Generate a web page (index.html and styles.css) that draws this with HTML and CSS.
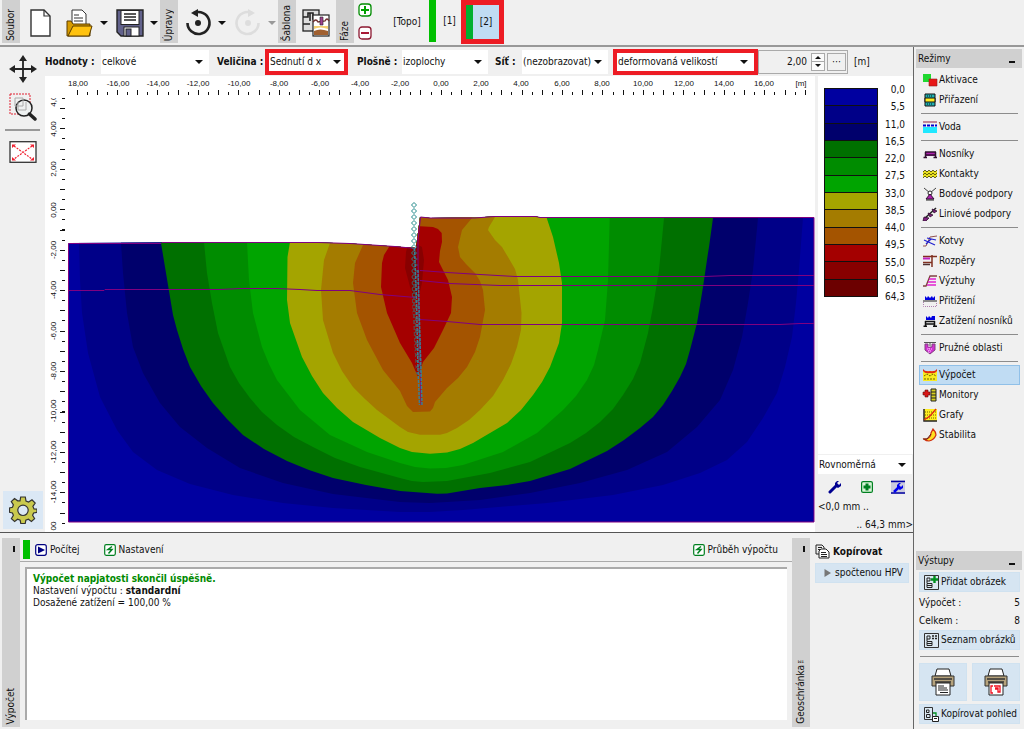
FILE: index.html
```html
<!DOCTYPE html>
<html lang="cs">
<head>
<meta charset="utf-8">
<title>Výpočet</title>
<link rel="stylesheet" href="styles.css">
</head>
<body>
<div class="app">
  <header class="toolbar">
    <span class="strip"><span class="strip-text">Soubor</span></span>
    <div class="tools file-tools">
      <button class="tool" aria-label="Nový"><svg width="22" height="28" viewBox="0 0 22 28"><path d="M1 1H14L20 7V27H1Z" fill="#fff" stroke="#333" stroke-width="1.4"/><path d="M14 1V7H20" fill="none" stroke="#333" stroke-width="1.2"/></svg></button>
      <button class="tool" aria-label="Otevřít"><svg width="28" height="28" viewBox="0 0 28 28"><path d="M6 16V1H16L20 5V16Z" fill="#fff" stroke="#333"/><path d="M8 6h5M8 9h9M8 12h9" stroke="#333" stroke-width="1.2"/><path d="M1 27V12H5L7 15H24V27Z" fill="#d79b00" stroke="#5a3c00"/><path d="M2 27L7 17H26L23 27Z" fill="#ffc20e" stroke="#5a3c00"/></svg></button>
      <button class="drop" aria-label="Poslední soubory"></button>
      <button class="tool" aria-label="Uložit"><svg width="28" height="28" viewBox="0 0 28 28"><path d="M1 1H27V27H5L1 23Z" fill="#62628c" stroke="#222" stroke-width="1.4"/><rect x="5" y="1.500" width="18" height="14" fill="#fff" stroke="#222"/><path d="M8 5h12M8 8h12M8 11h12" stroke="#222" stroke-width="1.3"/><rect x="8" y="18" width="15" height="9" fill="#fff" stroke="#222"/><rect x="10" y="20" width="5" height="7" fill="#62628c" stroke="#222"/></svg></button>
      <button class="drop" aria-label="Možnosti uložení"></button>
    </div>
    <span class="strip"><span class="strip-text">Úpravy</span></span>
    <div class="tools edit-tools">
      <button class="tool" aria-label="Zpět"><svg width="28" height="28" viewBox="0 0 28 28"><path d="M3.500 14A11 11 0 1 0 10 4" fill="none" stroke="#222" stroke-width="2.600"/><path d="M7 4L14 0V8Z" fill="#222"/><circle cx="14" cy="14" r="3" fill="#222"/></svg></button>
      <button class="drop" aria-label="Historie zpět"></button>
      <button class="tool" aria-label="Znovu" disabled><svg width="28" height="28" viewBox="0 0 28 28"><path d="M24.500 14A11 11 0 1 1 18 4" fill="none" stroke="#ddd" stroke-width="2.600"/><path d="M21 4L14 0V8Z" fill="#ddd"/><circle cx="14" cy="14" r="3" fill="#ddd"/></svg></button>
      <button class="drop faded" aria-label="Historie znovu" disabled></button>
    </div>
    <span class="strip"><span class="strip-text">Šablona</span></span>
    <div class="tools template-tools">
      <button class="tool" aria-label="Šablona"><svg width="28" height="28" viewBox="0 0 28 28"><rect x="1" y="1" width="16" height="21" fill="#ddd" stroke="#222" stroke-width="1.300"/><path d="M1 8H6V4H11V10H17M8 4V12M1 15H8" fill="none" stroke="#222" stroke-width="1.600"/><rect x="11" y="6" width="16" height="21" fill="#fff" stroke="#222" stroke-width="1.200"/><path d="M11 13Q14 9 16 13L23 12Q25 8 27 12" fill="none" stroke="#703030" stroke-width="1.300"/><path d="M18 8h3v8h-3z" fill="#a04090" stroke="#222" stroke-width=".6"/><path d="M12 17H26V20Q18 17 12 20Z" fill="#f3cf70"/><path d="M12 22Q18 19 26 22V26H12Z" fill="#a06030"/></svg></button>
    </div>
    <span class="strip"><span class="strip-text">Fáze</span></span>
    <div class="phase-edit">
      <button class="tool" aria-label="Přidat fázi"><svg width="14" height="14" viewBox="0 0 14 14"><rect x="1" y="1" width="12" height="12" rx="3" fill="#fff" stroke="#008c00" stroke-width="1.300"/><path d="M3 7H11M7 3V11" stroke="#00a000" stroke-width="2"/></svg></button>
      <button class="tool" aria-label="Odebrat fázi"><svg width="14" height="14" viewBox="0 0 14 14"><rect x="1" y="1" width="12" height="12" rx="3" fill="#fff" stroke="#8c1830" stroke-width="1.300"/><path d="M3 7H11" stroke="#a00020" stroke-width="1.800"/></svg></button>
    </div>
    <nav class="phases">
      <button class="phase topo">[Topo]</button>
      <button class="phase done">[1]</button>
      <button class="phase done current">[2]</button>
    </nav>
  </header>

  <div class="body">
    <main class="work">
      <section class="upper">
        <div class="view-tools">
          <button class="tool" aria-label="Posun"><svg width="28" height="28" viewBox="0 0 28 28"><path d="M14 3V25M3 14H25" stroke="#222" stroke-width="1.800"/><path d="M14 0L18 6H10ZM14 28L18 22H10ZM0 14L6 10V18ZM28 14L22 10V18Z" fill="#222"/></svg></button>
          <button class="tool" aria-label="Lupa"><svg width="28" height="28" viewBox="0 0 28 28"><rect x="1" y="1" width="20" height="20" fill="none" stroke="#e02030" stroke-dasharray="2 1"/><circle cx="15" cy="15" r="8" fill="#eef1f1" stroke="#222" stroke-width="1.500"/><path d="M6 5H14V13H6ZM9 9V17H17V9" fill="none" stroke="#aaa"/><path d="M20.500 21L26 26" stroke="#222" stroke-width="3.500" stroke-linecap="round"/></svg></button>
          <hr class="tool-line">
          <button class="tool" aria-label="Zobrazit vše"><svg width="28" height="22" viewBox="0 0 28 22"><rect x="1" y=".700" width="26" height="20.600" fill="#fff" stroke="#333" stroke-width="1.300"/><path d="M5 5L23 18M23 5L5 18" stroke="#f02030" stroke-width="1.200" stroke-dasharray="2 1.200"/><path d="M3 3.500H7L3 7ZM25 3.500H21L25 7ZM3 19.500H7L3 16ZM25 19.500H21L25 16Z" fill="#f02030"/></svg></button>
          <button class="tool gear" aria-label="Nastavení zobrazení"><svg width="28" height="28" viewBox="0 0 28 28"><path d="M11.700 1H16.300L17 5L19.600 6.100L23 3.800L26.200 7L23.900 10.400L25 13L28 13.200V16.300L24.600 17L23.600 19.300L25.600 22.600L22.400 25.500L19.400 23.300L16.800 24.300L16.200 27.500H11.800L11.200 24.300L8.600 23.300L5.600 25.500L2.400 22.600L4.400 19.300L3.400 17L.5 16.300V11.900L3.500 11.300L4.400 8.800L2.300 5.600L5.500 2.600L8.700 4.800L11 4.800Z" fill="#c9c94e" stroke="#333" stroke-width="1.200"/><circle cx="14" cy="14.300" r="5.200" fill="#dbe8f5" stroke="#333" stroke-width="1.200"/></svg></button>
        </div>

        <div class="view">
          <form class="options">
            <label class="lab lab-1" for="hod">Hodnoty :</label>
            <span class="combo w-1"><select id="hod"><option>celkové</option></select></span>
            <label class="lab lab-2" for="vel">Veličina :</label>
            <span class="combo w-2 marked"><select id="vel"><option>Sednutí d x</option></select></span>
            <label class="lab lab-3" for="plo">Plošně :</label>
            <span class="combo w-3"><select id="plo"><option>izoplochy</option></select></span>
            <label class="lab lab-4" for="sit">Síť :</label>
            <span class="combo w-4"><select id="sit"><option>(nezobrazovat)</option></select></span>
            <span class="combo w-5 marked"><select id="def" aria-label="Deformace"><option>deformovaná velikostí</option></select></span>
            <span class="spin">
              <input class="spin-value" id="scale" type="text" value="2,00" aria-label="Měřítko deformace">
              <span class="spin-buttons"><button type="button" class="up" aria-label="Zvýšit"></button><button type="button" class="down" aria-label="Snížit"></button></span>
              <button type="button" class="more" aria-label="Další">⋯</button>
            </span>
            <label class="unit" for="scale">[m]</label>
          </form>

          <div class="stage">
            <svg class="chart" viewBox="45 76 770 456" role="img" aria-label="Izoplochy sednutí">
              <defs>
                <pattern id="chain" patternUnits="userSpaceOnUse" x="411" y="202" width="6" height="6"><path d="M3 .5L5.500 3L3 5.500L.5 3Z" fill="none" stroke="#208888"/></pattern>
                <clipPath id="soil"><path d="M68.500 243L161 242.500L318 242.500L350 243.500L395 246.500L416 248L420 217L430 218L475 217.500L494 216.500L536 216.500L540 217.500H814V522H68.500Z"/></clipPath>
                <clipPath id="rule"><rect x="45" y="98" width="20" height="434"/></clipPath>
              </defs>
              <g class="ticks">
                <path d="M76.500 92.500H808" stroke-width="5" stroke-dasharray="1 19.230"/>
                <path d="M76.500 93.500H808" stroke-width="3" stroke-dasharray="1 9.115"/>
                <path d="M62 108.200V524" stroke-width="5" stroke-dasharray="1 19.220"/>
                <path d="M63.500 98V524" stroke-width="3" stroke-dasharray="1 9.110"/>
              </g>
              <g class="scale">
                <text x="78" y="86">18,00</text><text x="118" y="86">-16,00</text><text x="158" y="86">-14,00</text><text x="198" y="86">-12,00</text><text x="239" y="86">-10,00</text><text x="279" y="86">-8,00</text><text x="320" y="86">-6,00</text><text x="360" y="86">-4,00</text><text x="400" y="86">-2,00</text><text x="441" y="86">0,00</text><text x="481" y="86">2,00</text><text x="521" y="86">4,00</text><text x="562" y="86">6,00</text><text x="602" y="86">8,00</text><text x="643" y="86">10,00</text><text x="684" y="86">12,00</text><text x="724" y="86">14,00</text><text x="764" y="86">16,00</text><text x="801" y="86">[m]</text>
              </g>
              <g class="scale" clip-path="url(#rule)">
                <text transform="translate(56 99) rotate(-90)">4,00</text><text transform="translate(56 129) rotate(-90)">4,00</text><text transform="translate(56 169) rotate(-90)">2,00</text><text transform="translate(56 210) rotate(-90)">0,00</text><text transform="translate(56 250) rotate(-90)">-2,00</text><text transform="translate(56 290) rotate(-90)">-4,00</text><text transform="translate(56 331) rotate(-90)">-6,00</text><text transform="translate(56 371) rotate(-90)">-8,00</text><text transform="translate(56 411) rotate(-90)">-10,00</text><text transform="translate(56 452) rotate(-90)">-12,00</text><text transform="translate(56 492) rotate(-90)">-14,00</text><text transform="translate(56 526) rotate(-90)">00</text>
              </g>
              <g clip-path="url(#soil)">
                <rect x="68" y="210" width="747" height="312" fill="#0000a0"/>
                <path fill="#000088" d="M79 200V243L80 280L82 313L88 353L100 397L117 430L133 452L157 470L190 484L233 495L283 503L333 508L400 512L430 512L463 510L547 503L613 495L663 485L700 473L727 460L747 442L763 418L777 393L785 367L792 337L796 303L799 270L803 218V200Z"/>
                <path fill="#00006c" d="M121 200V243L123 273L127 313L133 347L143 373L160 403L180 427L207 448L240 468L283 483L333 494L400 502L430 503L480 500L530 493L580 483L627 470L667 452L697 427L720 400L733 370L742 337L748 303L753 270L758 218V200Z"/>
                <path fill="#007000" d="M161 200V243L165 267L170 297L173 315L177 330L183 349L190 367L201 386L213 403L227 419L243 435L264 449L287 461L309 470L333 478L366 485L400 491L437 493.700L447 493.500L480 488L507 485L530 481L570 469L607 451L624 440L640 428L653 417L663 405L672 391L680 377L686 364L690 350L697 323L703 287L708 253L709 247L713 218V200Z"/>
                <path fill="#008c00" d="M204 200V242L207 273L212 303L218 333L230 367L239 383L250 398L262 412L277 425L294 437L313 447L335 458L360 467L400 478L412 481L423 482L447 481L490 473L530 462L570 443L586 433L600 422L613 409L623 395L633 379L640 363L648 333L653 307L659 270L664 218V200Z"/>
                <path fill="#00a400" d="M247 200V242L249 280L253 313L262 347L269 364L277 380L300 410L330 435L367 452L400 463L415 467L430 468.500L446 468L463 465L503 452L537 433L563 410L576 396L587 380L594 365L598 350L605 320L608 280L609.700 218V200Z"/>
                <path fill="#a4a400" d="M290 200V242L287.500 257L287 300L290 323L302 357L312 376L323 393L337 408L353 422L380 438L400 448L412 452L430 453.700L447 452.500L460 449L473 443L507 423L521 410L533 395L542 382L550 367L559 343L562 323L562 283L559 263L553 237L546.700 218V200Z"/>
                <path fill="#a47c00" d="M333 200L330 243L324 260L321 290L323 320L333 353L342 371L353 387L365 399L377 410L400 427L408 432L420 434.700H440L447 433L457 428L469 420L480 410L493 396L503 380L511 364L517 347L521 330L521.500 313L518 280L515 269L508 257L502 247L495 240L488 230L489 227L495 217V200Z"/>
                <path fill="#a45400" d="M365 200L363 245L355 263L353 283L357 313L367 340L383 370L400 391L407 406L413 412L430 411.500L433 408L435 402L447 388L458 378L467 367L475 352L480 337L485 310L483 290L480 281L475 273L466 264L460 257L458 247L462 230L472 218V200Z"/>
                <path fill="#a40000" d="M391 240L389 247L384 255L382 263L381 287L387 313L400 343L412 363L418 377L423 362L434 348L443 330L451 313L452 297L448 280L439 262L440 251L442 242L441.700 233L438 229L433 227L416 226V240Z"/>
                <path fill="#880000" d="M409 240L406 252L405 268L410 287L415 300L419 296L422 283L424 260L422 247Z"/>
              </g>
              <g fill="none" stroke="#800080">
                <path d="M68.500 522V243.500H161L162 242.500H290L318 242.500L350 243.500L395 246.500L416 248.500M420.500 217L430 218L475 218L494 216.500H536L540 217.500H814V522H68.500"/>
                <path d="M68 290.500H104L105 289.500H220L240 288.500H276L300 289.500L317 290.500H350L380 294.500L416 297.500"/>
                <path d="M420 270.500L447 272.500L480 274.500L515 276.500H704L730 275.500H814M420 280.500L450 283.500L500 285.500H814M420 319.500L447 321.500L480 324.500H780L800 323.500H814M420.500 217L418 240V260L421 405"/>
              </g>
              <path d="M411 202H417V250L422 376H416L412 300L411 250Z" fill="url(#chain)"/>
              <path d="M414.500 248L416.500 300L418 370L419.500 405M418 270L420 340L422 405" fill="none" stroke="#3c7c94" stroke-width="1.500" stroke-dasharray="3 1"/>
            </svg>

            <aside class="legend">
              <div class="legend-scale">
                <div class="swatches"><i class="s1"></i><i class="s2"></i><i class="s3"></i><i class="s4"></i><i class="s5"></i><i class="s6"></i><i class="s7"></i><i class="s8"></i><i class="s9"></i><i class="s10"></i><i class="s11"></i><i class="s12"></i></div>
                <div class="levels"><span>0,0</span><span>5,5</span><span>11,0</span><span>16,5</span><span>22,0</span><span>27,5</span><span>33,0</span><span>38,5</span><span>44,0</span><span>49,5</span><span>55,0</span><span>60,5</span><span>64,3</span></div>
              </div>
              <span class="combo legend-combo"><select aria-label="Typ stupnice"><option>Rovnoměrná</option></select></span>
              <div class="legend-tools">
                <button class="tool" aria-label="Nastavení stupnice"><svg width="14" height="14" viewBox="0 0 14 14"><path d="M2 12L8 6" stroke="#000090" stroke-width="3" stroke-linecap="round"/><path d="M11 1L9 3L11 5L13 3L13 6L10 8L7 6L7 3L9 1Z" fill="#000090"/></svg></button>
                <button class="tool" aria-label="Přidat stupnici"><svg width="12" height="12" viewBox="0 0 12 12"><rect x=".6" y=".6" width="10.800" height="10.800" rx="1.500" fill="#d8f4d8" stroke="#008020" stroke-width="1.200"/><path d="M4.500 2.500h3v2h2v3h-2v2h-3v-2h-2v-3h2z" fill="#008020"/></svg></button>
                <button class="tool" aria-label="Správce stupnic"><svg width="14" height="14" viewBox="0 0 14 14"><rect width="14" height="14" fill="#ccd"/><path d="M0 1.500H14M0 13H14" stroke="#0000a0" stroke-width="1.500"/><path d="M3 12L7 8" stroke="#0000f0" stroke-width="2.500"/><path d="M10 3L8 5L10 7L12 5V8L9 10L6 8V5L8 3Z" fill="#0000f0"/></svg></button>
              </div>
              <div class="range-from">&lt;0,0 mm ..</div>
              <div class="range-to">.. 64,3 mm&gt;</div>
            </aside>
          </div>
        </div>
      </section>

      <section class="lower">
        <div class="strip strip-tall"><i class="pin"></i><span class="strip-text">Výpočet</span></div>
        <div class="calc">
          <div class="calc-bar">
            <i class="state"></i>
            <button class="action start"><svg width="12" height="12" viewBox="0 0 12 12"><rect x=".7" y=".7" width="10.600" height="10.600" rx="2" fill="#fff" stroke="#000080" stroke-width="1.200"/><path d="M3 2.500L10 6L3 9.500Z" fill="#000080"/></svg>Počítej</button>
            <button class="action"><svg width="12" height="12" viewBox="0 0 12 12"><rect x=".7" y=".7" width="10.600" height="10.600" rx="1.500" fill="#fff" stroke="#008020" stroke-width="1.200"/><path d="M8 2.500L4 5.500H8L4.500 9.500" fill="none" stroke="#008020" stroke-width="1.500"/></svg>Nastavení</button>
            <button class="action last"><svg width="12" height="12" viewBox="0 0 12 12"><rect x=".7" y=".7" width="10.600" height="10.600" rx="1.500" fill="#fff" stroke="#008020" stroke-width="1.200"/><path d="M8 2.500L4 5.500H8L4.500 9.500" fill="none" stroke="#008020" stroke-width="1.500"/></svg>Průběh výpočtu</button>
          </div>
          <div class="log">
            <p class="ok">Výpočet napjatosti skončil úspěšně.</p>
            <p>Nastavení výpočtu : <b>standardní</b></p>
            <p>Dosažené zatížení = 100,00 %</p>
          </div>
        </div>
        <div class="strip strip-tall"><i class="pin"></i><span class="strip-text">Geoschránka™</span></div>
        <div class="clip">
          <h2 class="clip-title"><svg width="15" height="15" viewBox="0 0 15 15"><path d="M1 1H7L9 3V10H1Z" fill="#eee" stroke="#222"/><path d="M3 3.500H7M3 5.500H7" stroke="#222"/><path d="M6 5H11L14 8V14H4V7Z" fill="#fff" stroke="#222"/><path d="M6 8.500H11M6 10.500H12M6 12.500H12" stroke="#222"/></svg>Kopírovat</h2>
          <button class="soft hpv"><svg width="7" height="8" viewBox="0 0 7 8"><path d="M.5 0L7 4L.5 8Z" fill="#777"/></svg>spočtenou HPV</button>
        </div>
      </section>
    </main>

    <aside class="side">
      <h2 class="side-title">Režimy<i class="dash"></i></h2>
      <nav class="modes">
        <button class="mode"><svg viewBox="0 0 16 14"><path d="M1 1H9V9H1Z" fill="#20d830"/><path d="M7 6H15V13H7Z" fill="#e81818" stroke="#902020" stroke-width=".6"/></svg>Aktivace</button>
        <button class="mode"><svg viewBox="0 0 16 14"><path d="M3 1H13V13H3Z" fill="#20b0b0" stroke="#111"/><path d="M3 5H13V9H3Z" fill="#ffee20" stroke="#111"/><path d="M5 3h6M5 11h6" stroke="#111" stroke-dasharray="1 1"/></svg>Přiřazení</button>
        <hr>
        <button class="mode"><svg viewBox="0 0 16 14"><path d="M1 2H15" stroke="#902040"/><path d="M1 7H15V13H1Z" fill="#20e8ff"/><path d="M1 5.500H15" stroke="#0000d0" stroke-width="2" stroke-dasharray="3 1"/></svg>Voda</button>
        <hr>
        <button class="mode"><svg viewBox="0 0 16 14"><path d="M3 5H14V9H3Z" fill="#b020b0"/><path d="M3 5H14M3.500 5V10M13.500 5V10M1.500 10.500H5M11.500 10.500H15M4 8H13" stroke="#301030" stroke-width="1.500"/></svg>Nosníky</button>
        <button class="mode"><svg viewBox="0 0 16 14"><path d="M1 4H15V10H1Z" fill="#e8e020"/><path d="M1 5L3 3L5 5L7 3L9 5L11 3L13 5L15 3M1 8L3 6L5 8L7 6L9 8L11 6L13 8L15 6M1 11L3 9L5 11L7 9L9 11L11 9L13 11L15 9" fill="none" stroke="#444000" stroke-width=".8"/></svg>Kontakty</button>
        <button class="mode"><svg viewBox="0 0 16 14"><path d="M2 1L8 6L14 1" fill="none" stroke="#444"/><circle cx="8" cy="6" r="2" fill="#fff" stroke="#222"/><path d="M8 7L12 12H4Z" fill="#b020b0" stroke="#301030"/><path d="M4 13H12" stroke="#222"/></svg>Bodové podpory</button>
        <button class="mode"><svg viewBox="0 0 16 14"><path d="M2 12L14 1" stroke="#222" stroke-width="1.500"/><path d="M2 10L7 11L4 14H1ZM6 6L11 8L8 10ZM10 2L15 4L12 6Z" fill="#802080" stroke="#301030" stroke-width=".8"/></svg>Liniové podpory</button>
        <hr>
        <button class="mode"><svg viewBox="0 0 16 14"><path d="M1 12H4L8 3L15 2" fill="none" stroke="#905050"/><path d="M2 6L13 11M5 4L14 6M4 10L9 5" fill="none" stroke="#2020d0" stroke-width="1.200"/></svg>Kotvy</button>
        <button class="mode"><svg viewBox="0 0 16 14"><path d="M1 2.500H10M1 8.500H10M10 1V13M10 2.500H15" stroke="#803020" stroke-width="1.500"/><path d="M1 4.500H8" stroke="#c020c0" stroke-width="2"/><path d="M1 10.500H8" stroke="#503030" stroke-width="1.500"/></svg>Rozpěry</button>
        <button class="mode"><svg viewBox="0 0 16 14"><path d="M1 12H4L8 2H15" fill="none" stroke="#804040" stroke-width="1.300"/><path d="M7 5H14M6 8H14M5 11H14" stroke="#e020d0" stroke-width="1.500"/></svg>Výztuhy</button>
        <button class="mode"><svg viewBox="0 0 16 14"><path d="M3 6V2L5 4L6 2L8 4L10 2L11 4L13 2V6Z" fill="#0000e0"/><path d="M1 7H15" stroke="#222"/><path d="M1.500 8V12.500H14.500V8" fill="none" stroke="#b080b0" stroke-dasharray="1 1"/></svg>Přitížení</button>
        <button class="mode"><svg viewBox="0 0 16 14"><path d="M4 6V2L6 4L7 2L9 4L10 2L13 2V6Z" fill="#0000e0"/><path d="M3 7.500H13M3.500 7V12M12.500 7V12M1.500 12.300H5M11 12.300H15M4 10H12" stroke="#111" stroke-width="1.500"/></svg>Zatížení nosníků</button>
        <hr>
        <button class="mode"><svg viewBox="0 0 16 14"><path d="M2 1.500H14M8 1V5" stroke="#555"/><path d="M3 3H6V6H10V3H13V9L8 13L3 9Z" fill="#d030d0" stroke="#804080"/><path d="M5 8h6M6 10h4M7 5v7" stroke="#ffc0ff" stroke-dasharray="1 1"/></svg>Pružné oblasti</button>
        <hr>
        <button class="mode selected"><svg viewBox="0 0 16 14"><path d="M1 3H15V13H1Z" fill="#f8ea20"/><path d="M1 1Q3 4 8 3Q13 4 15 1V3Q13 6 8 5Q3 6 1 3Z" fill="#e02818"/><path d="M2 8L5 6L8 8L11 6L14 8M2 11H14" fill="none" stroke="#706000" stroke-dasharray="2 1"/></svg>Výpočet</button>
        <button class="mode"><svg viewBox="0 0 16 14"><path d="M9 1H14V13H9Z" fill="#d8d020" stroke="#222"/><path d="M9 4H14M9 7H14M9 10H14" stroke="#222"/><path d="M3 2H6V4H8V7H6V9H3V7H1V4H3Z" fill="#d81818" stroke="#601010" stroke-width=".6"/></svg>Monitory</button>
        <button class="mode"><svg viewBox="0 0 16 14"><path d="M2 1H15V13H2Z" fill="#ffee20"/><path d="M2 1V13H15" fill="none" stroke="#222" stroke-width="1.500"/><path d="M3 4H15M3 7H15M3 10H15" stroke="#706000" stroke-dasharray="1 1"/><path d="M2 12L8 8L14 1" fill="none" stroke="#e02818" stroke-width="1.300"/></svg>Grafy</button>
        <button class="mode"><svg viewBox="0 0 16 14"><path d="M11 1Q14 4 14 7Q12 12 7 13Q4 13 2 11H5Q9 9 9 5Z" fill="#ffe020" stroke="#d03010" stroke-width="1.200"/><path d="M1 11H5L9 6" fill="none" stroke="#602010"/></svg>Stabilita</button>
      </nav>
      <h2 class="side-title outputs-title">Výstupy<i class="dash"></i></h2>
      <div class="outputs">
        <button class="soft"><svg width="15" height="15" viewBox="0 0 15 15"><path d="M.5 .5H14.500V14.500H.5Z" fill="#dbe8f2" stroke="#333"/><path d="M3 3V8M3 3H6V6H3M3 8.500H8V12.500H3ZM3 10.500H8" fill="none" stroke="#222"/><path d="M10.500 1V8M7 4.500H14" stroke="#009020" stroke-width="2.400"/></svg>Přidat obrázek</button>
        <div class="count"><span>Výpočet :</span><span>5</span></div>
        <div class="count"><span>Celkem :</span><span>8</span></div>
        <button class="soft"><svg width="15" height="15" viewBox="0 0 15 15"><path d="M.5 .5H14.500V14.500H.5Z" fill="#dbe8f2" stroke="#333"/><path d="M3 3V8M3 3H6V6H3M3 8.500H8V12.500H3ZM3 10.500H8" fill="none" stroke="#222"/><path d="M8 3H13M8 5.500H13" stroke="#222" stroke-width="1.500" stroke-dasharray="2 1"/></svg>Seznam obrázků</button>
        <hr>
        <div class="prints">
          <button class="soft" aria-label="Tisk"><svg width="24" height="28" viewBox="0 0 24 28"><path d="M4 8L6 1H18L20 8Z" fill="#fff" stroke="#222"/><path d="M1 8H23V18H1Z" fill="#b5a27c" stroke="#333"/><path d="M3 11H21M4 14H20" stroke="#333" stroke-width="1.500"/><path d="M5 15H19V27H5Z" fill="#fff" stroke="#222"/><path d="M7 18H13M7 20H16M7 22H17M9 24.500H17" stroke="#222"/></svg></button>
          <button class="soft" aria-label="Tisk pohledu"><svg width="24" height="28" viewBox="0 0 24 28"><path d="M4 8L6 1H18L20 8Z" fill="#fff" stroke="#222"/><path d="M1 8H23V18H1Z" fill="#b5a27c" stroke="#333"/><path d="M3 11H21M4 14H20" stroke="#333" stroke-width="1.500"/><path d="M5 15H19V27H5Z" fill="#fff" stroke="#222"/><path d="M9 18H7V25H9M10 18H16V24H14V20H11M11 21H14" fill="none" stroke="#f01020" stroke-width="1.300"/></svg></button>
        </div>
        <button class="soft"><svg width="15" height="15" viewBox="0 0 15 15"><path d="M.5 .5H8.500V12.500H.5Z" fill="#dbe8f2" stroke="#333"/><path d="M2.500 3H5V5.500H2.500ZM2.500 7.500H6V10.500H2.500Z" fill="none" stroke="#222"/><path d="M9 6H12V9" fill="none" stroke="#009020" stroke-width="1.300"/><path d="M8.500 9.500H14.500V14.500H8.500ZM10 11.500H13" fill="#fff" stroke="#222"/></svg>Kopírovat pohled</button>
      </div>
    </aside>
  </div>
</div>
</body>
</html>
```
FILE: styles.css
```css
* { box-sizing: border-box; }
body {
  margin: 0;
  background: #f0f0f0;
  color: #111;
  font: 10px/14px "DejaVu Sans Condensed", "Noto Sans", sans-serif;
}
button, input, select { font: inherit; color: inherit; }
button { padding: 0; border: 0; background: none; }
svg { display: block; flex: none; }
h2, p { margin: 0; font-size: 10px; }
hr { margin: 3px 2px; border: 0; border-top: 1px solid #8c8c8c; }

.app { display: flex; flex-direction: column; min-height: 100vh; }
.toolbar { display: flex; flex: none; height: 47px; padding: 0 2px; border-bottom: 2px solid #989898; }
.strip { display: flex; flex: none; flex-direction: column; justify-content: flex-end; align-items: center; width: 18px; height: 43px; padding-bottom: 2px; background: #d0d0d0; }
.strip-text { writing-mode: vertical-rl; transform: rotate(180deg); white-space: nowrap; }
.tools { display: flex; align-items: center; height: 45px; }
.tool { display: flex; justify-content: center; align-items: center; }
.drop::before, .combo::after { content: ""; display: block; border: 4px solid transparent; border-top-color: #111; border-bottom: 0; }
.drop.faded::before { border-top-color: #999; }
.file-tools { width: 140px; gap: 6px; padding-left: 10px; }
.file-tools .drop:nth-of-type(3) { margin-right: 2px; }
.file-tools .tool:first-child { margin-right: 8px; }
.edit-tools { width: 100px; gap: 6px; padding-left: 6px; }
.edit-tools .drop:nth-of-type(2) { margin-right: 2px; }
.template-tools { width: 40px; padding-left: 6px; }
.phase-edit { display: flex; flex-direction: column; justify-content: space-between; height: 41px; padding: 3px 4px 1px; }
.phases { display: flex; align-items: flex-start; padding-left: 9px; }
.phase { height: 44px; }
.topo { width: 44px; }
.done { width: 32px; padding: 0 0 0 2px; border-left: 7px solid #00c000; }
.done:not(.current) { height: 42px; }
.current { width: 43px; padding-left: 7px; border: 5px solid #ed1c24; background: linear-gradient(to right, #00b030 7px, #c0dcf3 7px); }

.body { display: flex; flex: 1; }
.work { display: flex; flex: 1; flex-direction: column; min-width: 0; }
.upper { display: flex; flex: 1; }
.view-tools { display: flex; flex: none; flex-direction: column; align-items: center; width: 45px; padding: 8px 0 3px; gap: 10px; }
.tool-line { align-self: stretch; margin: -2px 5px 0; border-top: 2px solid #999; }
.gear { width: 40px; height: 38px; margin-top: auto; background: #dbe8f5; }
.view { display: flex; flex: 1; flex-direction: column; min-width: 0; }
.options { display: flex; flex: none; align-items: center; height: 29px; white-space: nowrap; }
.lab { font-weight: bold; }
.lab-1 { width: 56px; }
.lab-2 { width: 56px; padding-left: 8px; }
.lab-3 { width: 54px; padding-left: 9px; }
.lab-4 { width: 34px; padding-left: 7px; }
.combo { position: relative; display: flex; align-items: center; height: 24px; background: #fff; }
.combo::after { position: absolute; right: 6px; pointer-events: none; }
.combo select { width: 100%; height: 100%; padding: 0 0 0 1px; border: 0; background: none; appearance: none; }
.marked { height: 26px; border: 4px solid #ed1c24; }
.marked::after { right: 3px; }
.w-1 { width: 108px; }
.w-2 { width: 83px; }
.w-3 { width: 86px; }
.w-4 { width: 86px; }
.w-5 { width: 145px; margin-left: 5px; }
.w-5::after { right: 6px; }
.spin { display: flex; align-items: center; width: 90px; height: 24px; padding: 1px; border: 1px solid #aaa; }
.spin-value { flex: 1; min-width: 0; padding: 0 4px 0 0; border: 0; background: none; text-align: right; }
.spin-buttons { display: flex; flex-direction: column; width: 14px; height: 18px; border: 1px solid #aaa; }
.spin-buttons button { display: flex; flex: 1; justify-content: center; align-items: center; background: #fafafa; }
.spin-buttons .down { border-top: 1px solid #aaa; }
.up::before, .down::before { content: ""; border: 3px solid transparent; }
.up::before { border-top: 0; border-bottom-color: #111; }
.down::before { border-bottom: 0; border-top-color: #111; }
.more { width: 19px; height: 18px; margin-left: 2px; border: 1px solid #aaa; line-height: 12px; }
.unit { padding-left: 6px; }

.stage { display: flex; flex: 1; min-height: 0; }
.chart { flex: 1 1 0; min-width: 0; min-height: 0; background: #fff; }
.ticks { fill: none; stroke: #111; shape-rendering: crispEdges; }
.scale { font: 8px "Liberation Sans", sans-serif; text-anchor: middle; fill: #111; }
.legend { display: flex; flex: none; flex-direction: column; width: 98px; padding-left: 3px; }
.legend-scale { display: flex; flex: 1; align-items: flex-start; justify-content: space-between; padding: 7px 8px 0 6px; background: #fff; }
.swatches { display: flex; flex-direction: column; width: 54px; height: 209px; margin-top: 5px; border: 1px solid #111; }
.swatches i { flex: 1; border-bottom: 1px solid #111; }
.swatches i:last-child { border-bottom: 0; }
.s1 { background: #0000a0; }
.s2 { background: #000088; }
.s3 { background: #00006c; }
.s4 { background: #007000; }
.s5 { background: #008c00; }
.s6 { background: #00a400; }
.s7 { background: #a4a400; }
.s8 { background: #a47c00; }
.s9 { background: #a45400; }
.s10 { background: #a40000; }
.s11 { background: #880000; }
.s12 { background: #6c0000; }
.levels { display: flex; flex-direction: column; justify-content: space-between; height: 221px; text-align: right; }
.legend-combo { height: 19px; margin: 1px 1px 0 0; }
.legend-tools { display: flex; justify-content: space-between; align-items: center; height: 25px; padding: 0 8px 0 10px; }
.range-from { padding-top: 1px; }
.range-to { padding: 4px 0 0; text-align: right; white-space: nowrap; }

.lower { display: flex; flex: none; height: 197px; padding: 5px 0 2px 2px; border-top: 1px solid #555; }
.strip-tall { height: auto; justify-content: space-between; padding: 8px 0 3px; }
.pin { width: 2px; height: 6px; margin-left: 6px; background: #111; }
.calc { display: flex; flex: 1; flex-direction: column; min-width: 0; }
.calc-bar { display: flex; flex: none; align-items: center; height: 24px; padding: 0 14px 0 3px; border-bottom: 1px solid #aaa; }
.state { width: 7px; height: 19px; margin-right: 5px; background: #00c000; }
.action { display: flex; align-items: center; gap: 3px; }
.start { margin-right: 24px; }
.last { margin-left: auto; }
.log { flex: 1; margin: 5px 5px 7px; padding: 4px 6px; border: solid #aaa; border-width: 2px 0 0 2px; background: #fff; line-height: 12px; }
.ok { color: #008a00; font-weight: bold; }
.clip { flex: none; width: 103px; padding: 6px 4px 0 5px; }
.clip-title { display: flex; align-items: center; gap: 3px; }
.soft { display: flex; align-items: center; width: 100%; height: 20px; gap: 2px; padding-left: 4px; border: 1px solid #d0e2f0; background: #d6e5f2; white-space: nowrap; }
.hpv { gap: 4px; margin-top: 4px; padding-left: 8px; }

.side { display: flex; flex: none; flex-direction: column; width: 111px; padding: 2px 2px 5px; border-left: 1px solid #666; }
.side-title { display: flex; flex: none; justify-content: space-between; align-items: center; height: 19px; padding: 0 7px 0 2px; background: #d0d0d0; font-weight: normal; }
.dash { width: 6px; height: 2px; margin-top: 6px; background: #111; }
.modes { display: flex; flex-direction: column; padding: 2px 2px 0 3px; }
.mode { display: flex; align-items: center; height: 20px; gap: 1px; padding-left: 2px; border: 1px solid transparent; white-space: nowrap; }
.mode svg { width: 16px; height: 14px; }
.selected { border-color: #90c0e8; background: #c0dcf3; }
.outputs-title { margin-top: auto; }
.outputs { padding: 2px 2px 0 3px; }
.count { display: flex; justify-content: space-between; height: 18px; line-height: 18px; }
.count:nth-of-type(1) { margin-top: 2px; }
.outputs hr { margin: 6px 1px; }
.prints { display: flex; gap: 5px; margin-bottom: 3px; }
.prints .soft { justify-content: center; height: 38px; padding: 0; }
```
